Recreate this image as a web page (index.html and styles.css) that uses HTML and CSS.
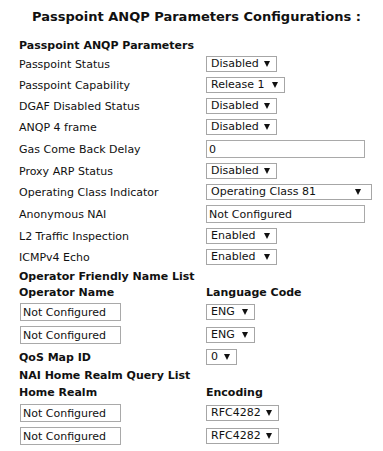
FILE: index.html
```html
<!DOCTYPE html>
<html lang="en">
<head>
    <meta charset="UTF-8">
    <meta name="viewport" content="width=device-width, initial-scale=1.0">
    <title>Passpoint ANQP Parameters</title>
    <link rel="stylesheet" href="styles.css">
</head>
<body>
    <h1 class="page-title">Passpoint ANQP Parameters Configurations :</h1>

    <form class="config-form">
        <div class="section-title">Passpoint ANQP Parameters</div>

        <label>Passpoint Status</label>
        <div class="field"><span class="select-wrap w-71"><select><option>Disabled</option><option>Enabled</option></select></span></div>

        <label>Passpoint Capability</label>
        <div class="field"><span class="select-wrap w-79"><select><option>Release 1</option><option>Release 2</option></select></span></div>

        <label>DGAF Disabled Status</label>
        <div class="field"><span class="select-wrap w-71"><select><option>Disabled</option><option>Enabled</option></select></span></div>

        <label>ANQP 4 frame</label>
        <div class="field"><span class="select-wrap w-71"><select><option>Disabled</option><option>Enabled</option></select></span></div>

        <label>Gas Come Back Delay</label>
        <div class="field"><input type="text" class="wide" value="0"></div>

        <label>Proxy ARP Status</label>
        <div class="field"><span class="select-wrap w-71"><select><option>Disabled</option><option>Enabled</option></select></span></div>

        <label>Operating Class Indicator</label>
        <div class="field"><span class="select-wrap w-166 arrow-far"><select><option>Operating Class 81</option><option>Operating Class 115</option></select></span></div>

        <label>Anonymous NAI</label>
        <div class="field"><input type="text" class="wide" value="Not Configured"></div>

        <label>L2 Traffic Inspection</label>
        <div class="field"><span class="select-wrap w-71"><select><option>Enabled</option><option>Disabled</option></select></span></div>

        <label>ICMPv4 Echo</label>
        <div class="field"><span class="select-wrap w-71"><select><option>Enabled</option><option>Disabled</option></select></span></div>

        <!-- Operator friendly names -->
        <div class="section-title">Operator Friendly Name List</div>
        <div class="col-head">Operator Name</div>
        <div class="col-head">Language Code</div>

        <div class="field"><input type="text" class="short" value="Not Configured"></div>
        <div class="field"><span class="select-wrap w-49"><select><option>ENG</option></select></span></div>

        <div class="field"><input type="text" class="short" value="Not Configured"></div>
        <div class="field"><span class="select-wrap w-49"><select><option>ENG</option></select></span></div>

        <div class="col-head qos">QoS Map ID</div>
        <div class="field"><span class="select-wrap w-31"><select><option>0</option><option>1</option></select></span></div>

        <!-- NAI realm list -->
        <div class="section-title short-line">NAI Home Realm Query List</div>
        <div class="col-head tall">Home Realm</div>
        <div class="col-head tall">Encoding</div>

        <div class="field"><input type="text" class="short" value="Not Configured"></div>
        <div class="field"><span class="select-wrap w-73"><select><option>RFC4282</option><option>UTF-8</option></select></span></div>

        <div class="field"><input type="text" class="short" value="Not Configured"></div>
        <div class="field"><span class="select-wrap w-73"><select><option>RFC4282</option><option>UTF-8</option></select></span></div>
    </form>
</body>
</html>
```

FILE: styles.css
```css
body {
    font-family: 'DejaVu Sans', Verdana, sans-serif;
    font-size: 11px;
    color: #111;
    background-color: #fff;
    margin: 0;
}

.page-title {
    font-size: 13px;
    font-weight: bold;
    line-height: 17px;
    text-align: center;
    margin: 8px 0 12px 10px;
}

.config-form {
    display: grid;
    grid-template-columns: 187px 1fr;
    align-items: center;
    padding-left: 19px;
}

.config-form label {
    line-height: 14px;
}

.section-title {
    grid-column: 1 / 3;
    font-size: 11px;
    font-weight: bold;
    line-height: 17px;
}

.section-title.short-line {
    line-height: 16px;
}

.col-head {
    font-size: 11px;
    font-weight: bold;
    line-height: 16px;
}

.col-head.tall {
    line-height: 18px;
}

.col-head.qos {
    line-height: 14px;
}

.field {
    display: flex;
    align-items: center;
    padding: 2px 0 3px;
}

/* select boxes with a small black arrow */
.select-wrap {
    position: relative;
    display: inline-block;
    height: 16px;
}

.select-wrap select {
    appearance: none;
    -webkit-appearance: none;
    width: 100%;
    height: 16px;
    box-sizing: border-box;
    margin: 0;
    padding: 0 12px 0 4px;
    border: 1px solid #a6a6a6;
    border-radius: 0;
    background-color: #fff;
    font-family: 'DejaVu Sans', Verdana, sans-serif;
    font-size: 11px;
    line-height: 14px;
    color: #111;
}

.select-wrap::after {
    content: "";
    position: absolute;
    right: 7px;
    top: 5px;
    border-left: 3px solid transparent;
    border-right: 3px solid transparent;
    border-top: 6px solid #111;
    pointer-events: none;
}

.select-wrap.arrow-far::after {
    right: 11px;
}

.w-31 { width: 31px; }
.w-49 { width: 49px; }
.w-71 { width: 71px; }
.w-73 { width: 73px; }
.w-79 { width: 79px; }
.w-166 { width: 166px; }

input[type="text"] {
    height: 18px;
    box-sizing: border-box;
    margin: 0;
    padding: 0 2px;
    border: 1px solid #a9a9a9;
    border-radius: 0;
    font-family: 'DejaVu Sans', Verdana, sans-serif;
    font-size: 11px;
    color: #111;
}

input.wide {
    width: 159px;
}

input.short {
    width: 101px;
    margin-left: 1px;
}
```
